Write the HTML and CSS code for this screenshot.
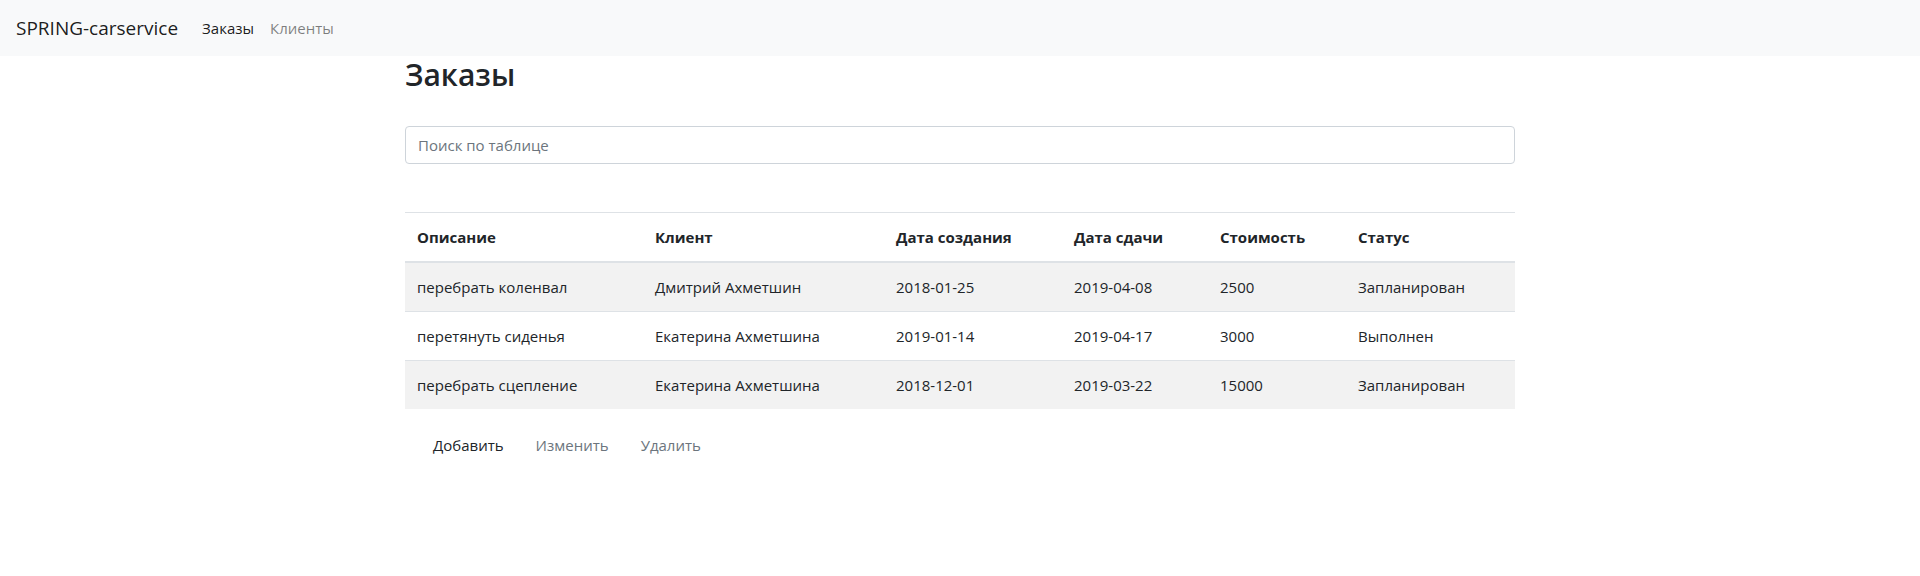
FILE: index.html
```html
<!DOCTYPE html>
<html lang="ru">
<head>
<meta charset="utf-8">
<title>SPRING-carservice</title>
<link rel="stylesheet" href="styles.css">
</head>
<body>
<nav class="navbar">
  <a class="brand" href="#">SPRING-carservice</a>
  <ul class="nav-menu">
    <li><a class="nav-link active" href="#">Заказы</a></li>
    <li><a class="nav-link" href="#">Клиенты</a></li>
  </ul>
</nav>
<main class="container">
  <h2 class="title">Заказы</h2>
  <input class="search" type="text" placeholder="Поиск по таблице">
  <table class="orders">
    <colgroup>
      <col class="c-desc"><col class="c-client"><col class="c-created"><col class="c-due"><col class="c-cost"><col class="c-status">
    </colgroup>
    <thead>
      <tr><th>Описание</th><th>Клиент</th><th>Дата создания</th><th>Дата сдачи</th><th>Стоимость</th><th>Статус</th></tr>
    </thead>
    <tbody>
      <tr><td>перебрать коленвал</td><td>Дмитрий Ахметшин</td><td>2018-01-25</td><td>2019-04-08</td><td>2500</td><td>Запланирован</td></tr>
      <tr><td>перетянуть сиденья</td><td>Екатерина Ахметшина</td><td>2019-01-14</td><td>2019-04-17</td><td>3000</td><td>Выполнен</td></tr>
      <tr><td>перебрать сцепление</td><td>Екатерина Ахметшина</td><td>2018-12-01</td><td>2019-03-22</td><td>15000</td><td>Запланирован</td></tr>
    </tbody>
  </table>
  <div class="actions">
    <a class="action" href="#">Добавить</a>
    <a class="action disabled" href="#">Изменить</a>
    <a class="action disabled" href="#">Удалить</a>
  </div>
</main>
</body>
</html>
```
FILE: styles.css
```css
* { box-sizing: border-box; }
html, body { margin: 0; }
body {
  font-family: "Open Sans", "Noto Sans", sans-serif;
  font-size: 15px;
  line-height: 24px;
  color: #212529;
  background: #fff;
}
a { text-decoration: none; }

.navbar {
  display: flex;
  align-items: center;
  height: 56px;
  padding: 8px 16px;
  background: #f8f9fa;
}
.brand {
  font-size: 19px;
  line-height: 30px;
  padding: 5px 0;
  margin-right: 16px;
  color: rgba(0,0,0,.9);
}
.nav-menu {
  display: flex;
  list-style: none;
  margin: 0;
  padding: 0;
}
.nav-link {
  display: block;
  padding: 8px;
  color: rgba(0,0,0,.5);
}
.nav-link.active { color: rgba(0,0,0,.9); }

.container {
  max-width: 1140px;
  margin: 0 auto;
  padding: 0 15px;
}
.title {
  margin: 0 0 32px;
  font-size: 30px;
  font-weight: 600;
  line-height: 38px;
}
.search {
  display: block;
  width: 100%;
  height: 38px;
  margin: 0;
  padding: 6px 12px;
  font: inherit;
  color: #495057;
  border: 1px solid #ced4da;
  border-radius: 4px;
  background: #fff;
}
.search::placeholder { color: #6c757d; }

.orders {
  width: 100%;
  margin-top: 48px;
  margin-bottom: 16px;
  border-collapse: collapse;
  table-layout: fixed;
}
.c-desc { width: 238px; }
.c-client { width: 241px; }
.c-created { width: 178px; }
.c-due { width: 146px; }
.c-cost { width: 138px; }
.c-status { width: 169px; }
.orders th, .orders td {
  padding: 12px;
  text-align: left;
  vertical-align: top;
  border-top: 1px solid #dee2e6;
  white-space: nowrap;
}
.orders th {
  font-weight: 700;
  border-bottom: 2px solid #dee2e6;
}
.orders tbody tr:nth-child(odd) { background: rgba(0,0,0,.05); }

.actions {
  display: flex;
  padding-left: 12px;
}
.action {
  display: block;
  padding: 8px 16px;
  color: #212529;
}
.action.disabled { color: #6c757d; }
```
